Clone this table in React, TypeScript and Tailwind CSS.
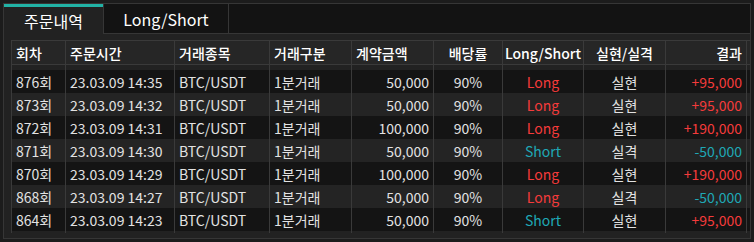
const COLS = "grid-cols-[54px_109px_95px_82px_82px_69px_81px_82px_82px]";

interface Order {
  round: number;
  time: string;
  symbol: string;
  kind: string;
  amount: string;
  rate: string;
  side: "Long" | "Short";
  hit: "실현" | "실격";
  result: string;
}

const orders: Order[] = [
  { round: 876, time: "23.03.09 14:35", symbol: "BTC/USDT", kind: "1분거래", amount: "50,000", rate: "90%", side: "Long", hit: "실현", result: "+95,000" },
  { round: 873, time: "23.03.09 14:32", symbol: "BTC/USDT", kind: "1분거래", amount: "50,000", rate: "90%", side: "Long", hit: "실현", result: "+95,000" },
  { round: 872, time: "23.03.09 14:31", symbol: "BTC/USDT", kind: "1분거래", amount: "100,000", rate: "90%", side: "Long", hit: "실현", result: "+190,000" },
  { round: 871, time: "23.03.09 14:30", symbol: "BTC/USDT", kind: "1분거래", amount: "50,000", rate: "90%", side: "Short", hit: "실격", result: "-50,000" },
  { round: 870, time: "23.03.09 14:29", symbol: "BTC/USDT", kind: "1분거래", amount: "100,000", rate: "90%", side: "Long", hit: "실현", result: "+190,000" },
  { round: 868, time: "23.03.09 14:27", symbol: "BTC/USDT", kind: "1분거래", amount: "50,000", rate: "90%", side: "Long", hit: "실격", result: "-50,000" },
  { round: 864, time: "23.03.09 14:23", symbol: "BTC/USDT", kind: "1분거래", amount: "50,000", rate: "90%", side: "Short", hit: "실현", result: "+95,000" },
];

const headers: { label: string; align: string }[] = [
  { label: "회차", align: "justify-start" },
  { label: "주문시간", align: "justify-start" },
  { label: "거래종목", align: "justify-start" },
  { label: "거래구분", align: "justify-start" },
  { label: "계약금액", align: "justify-start" },
  { label: "배당률", align: "justify-center" },
  { label: "Long/Short", align: "justify-center" },
  { label: "실현/실격", align: "justify-center" },
  { label: "결과", align: "justify-end" },
];

const cell = "flex items-center border-l border-[#3a3a3a] px-[4px] whitespace-nowrap";

function Spacer({ h }: { h: string }) {
  return (
    <div className={`grid ${COLS} ${h}`}>
      {headers.map((c) => (
        <div key={c.label} className="border-l border-[#3a3a3a] last:border-r" />
      ))}
    </div>
  );
}

export default function App() {
  return (
    <div
      className="h-[242px] w-[754px] bg-[#1c1c1c] p-[3px] text-[14px] leading-none"
      style={{ fontFamily: '"Noto Sans CJK KR", "Noto Sans", sans-serif' }}
    >
      <div className="flex h-full flex-col border border-[#363636] bg-[#222]">
        {/* tabs */}
        <div className="flex h-[30px] shrink-0">
          <div className="flex w-[99px] flex-col bg-[#222]">
            <div className="h-[3px] bg-[#22b3a6]" />
            <div className="flex flex-1 items-center justify-center text-[16px] text-white">주문내역</div>
          </div>
          <div className="flex w-[126px] items-center justify-center border-x border-b border-[#363636] bg-[#131313] text-[16px] text-white">
            Long/Short
          </div>
          <div className="flex-1 border-b border-[#363636] bg-[#131313]" />
        </div>

        {/* table */}
        <div className="pl-[7px] pt-[6px]">
          <div className={`grid ${COLS} h-[25px] border-y border-[#3a3a3a] bg-[#262626] font-medium text-white`}>
            {headers.map((h) => (
              <div key={h.label} className={`${cell} ${h.align} last:border-r`}>
                {h.label}
              </div>
            ))}
          </div>
          <Spacer h="h-[5px]" />
          {orders.map((o, i) => {
            const sideColor = o.side === "Long" ? "text-[#f53b3b]" : "text-[#1fa8b6]";
            const resColor = o.result.startsWith("+") ? "text-[#f53b3b]" : "text-[#1fa8b6]";
            return (
              <div
                key={o.round}
                className={`grid ${COLS} h-[23px] text-[#e2e2e2] ${i % 2 === 0 ? "bg-[#141414]" : "bg-[#242424]"}`}
              >
                <div className={cell}>{o.round}회</div>
                <div className={cell}>{o.time}</div>
                <div className={cell}>{o.symbol}</div>
                <div className={cell}>{o.kind}</div>
                <div className={`${cell} justify-end`}>{o.amount}</div>
                <div className={`${cell} justify-center`}>{o.rate}</div>
                <div className={`${cell} justify-center ${sideColor}`}>{o.side}</div>
                <div className={`${cell} justify-center`}>{o.hit}</div>
                <div className={`${cell} justify-end border-r ${resColor}`}>{o.result}</div>
              </div>
            );
          })}
          <Spacer h="h-[2px]" />
        </div>
      </div>
    </div>
  );
}
